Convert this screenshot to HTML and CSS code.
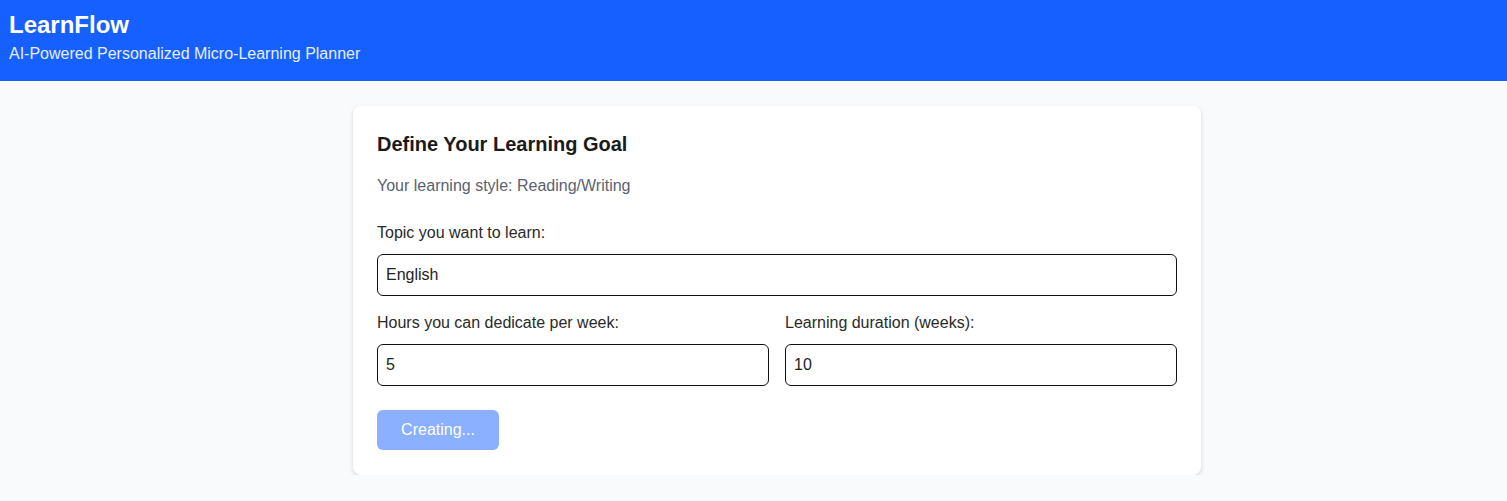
FILE: index.html
```html
<!DOCTYPE html>
<html>
<head>
<meta charset="utf-8">
<link rel="stylesheet" href="styles.css">
</head>
<body>
<header class="top">
  <h1 class="brand">LearnFlow</h1>
  <p class="tagline">AI-Powered Personalized Micro-Learning Planner</p>
</header>
<main class="main">
  <section class="card">
    <h2 class="card-title">Define Your Learning Goal</h2>
    <p class="style-note">Your learning style: Reading/Writing</p>
    <div class="field">
      <label class="label">Topic you want to learn:</label>
      <input class="input" type="text" value="English">
    </div>
    <div class="row">
      <div class="field">
        <label class="label">Hours you can dedicate per week:</label>
        <input class="input" type="text" value="5">
      </div>
      <div class="field">
        <label class="label">Learning duration (weeks):</label>
        <input class="input" type="text" value="10">
      </div>
    </div>
    <button class="btn" disabled>Creating...</button>
  </section>
</main>
</body>
</html>
```
FILE: styles.css
```css
* { box-sizing: border-box; }
html, body { margin: 0; padding: 0; }
body {
  font-family: "Liberation Sans", Arial, sans-serif;
  background: #f9fafb;
  color: #1f2937;
}
.top {
  background: #1660ff;
  color: #fff;
  height: 81px;
  padding: 11px 9px 0;
}
.brand {
  margin: 0;
  font-size: 24px;
  line-height: 28px;
  font-weight: 700;
}
.tagline {
  margin: 5px 0 0;
  font-size: 16px;
  line-height: 20px;
  color: #e6eeff;
}
.main {
  padding: 25px 0 0 47px;
  display: flex;
  justify-content: center;
}
.card {
  width: 848px;
  background: #fff;
  border-radius: 8px;
  box-shadow: 0 2px 5px rgba(0,0,0,0.12), 0 1px 2px rgba(0,0,0,0.05);
  padding: 26px 24px 25px;
}
.card-title {
  margin: 0;
  font-size: 20px;
  line-height: 24px;
  font-weight: 700;
  color: #1a1a1a;
}
.style-note {
  margin: 20px 0 0;
  font-size: 16px;
  line-height: 20px;
  color: #5b6270;
}
.field {
  display: flex;
  flex-direction: column;
  margin-top: 27px;
}
.row {
  display: grid;
  grid-template-columns: 1fr 1fr;
  gap: 16px;
}
.row .field { margin-top: 17px; }
.label {
  font-size: 16px;
  line-height: 20px;
  color: #2a2a2a;
  margin-bottom: 11px;
}
.input {
  height: 42px;
  border: 1px solid #111;
  border-radius: 6px;
  padding: 0 8px;
  font-family: "Liberation Sans", Arial, sans-serif;
  font-size: 16px;
  color: #222;
  background: #fff;
}
.btn {
  margin-top: 24px;
  width: 122px;
  height: 40px;
  border: 0;
  border-radius: 6px;
  background: #8ab0ff;
  color: #fff;
  font-family: "Liberation Sans", Arial, sans-serif;
  font-size: 16px;
}
```
